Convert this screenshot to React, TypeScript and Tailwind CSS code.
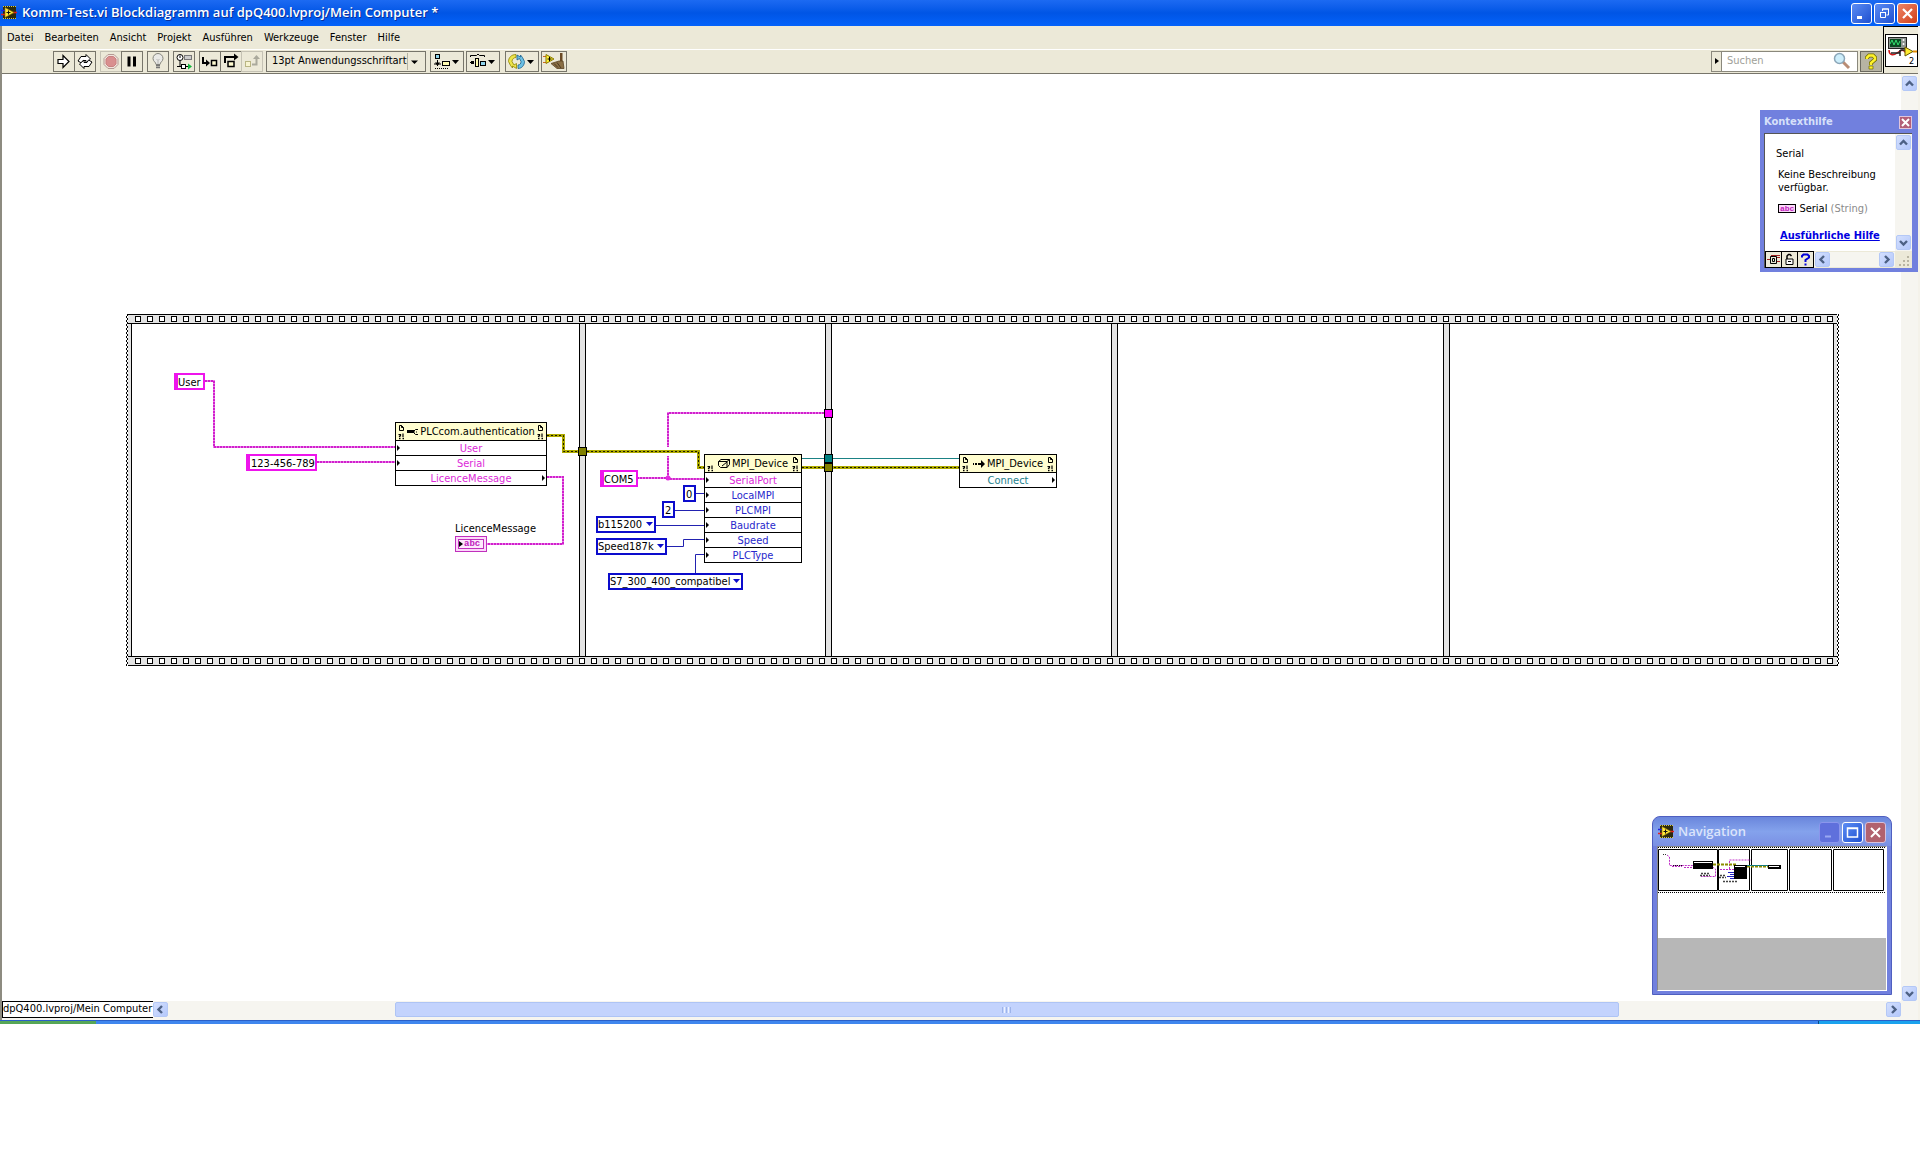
import type { ReactNode } from 'react'
import { clsx } from 'clsx'

const MENU = ['Datei', 'Bearbeiten', 'Ansicht', 'Projekt', 'Ausführen', 'Werkzeuge', 'Fenster', 'Hilfe']

type Direction = 'up' | 'down' | 'left' | 'right'

const CHEVRONS: Record<Direction, string> = {
  up: 'M2 7.500 5.500 4 9 7.500',
  down: 'M2 4 5.500 7.500 9 4',
  left: 'M7 2 3.500 5.500 7 9',
  right: 'M4 2 7.500 5.500 4 9',
}

function ViIcon() {
  return (
    <svg width="16" height="16" viewBox="0 0 16 16" className="shrink-0" aria-hidden="true">
      <rect x="2" y="1" width="13" height="13" fill="#2b2a10" />
      <path d="M2 1.500h13M2 13.500h13" stroke="#d8c840" strokeDasharray="1 1" />
      <path d="M0 5.500h4" stroke="#2020e0" strokeWidth="1.500" />
      <path d="M0 9.500h4M12 7.500h4" stroke="#e02020" strokeWidth="1.500" />
      <path d="M4 2.500v10L13 7.500z" fill="#ffe83a" stroke="#8a6a00" strokeWidth=".6" />
      <path d="M5.500 7.500h4M7.500 5.500v4" stroke="#111" />
    </svg>
  )
}

function WindowButton({ label, tone = 'blue', children }: { label: string; tone?: 'blue' | 'red' | 'dimmed' | 'dimred'; children: ReactNode }) {
  return (
    <button
      type="button"
      aria-label={label}
      className={clsx(
        'flex size-[21px] items-center justify-center rounded-[3px] border',
        tone === 'blue' && 'border-white bg-linear-to-br from-[#5c8cf4] to-[#1f4fd0]',
        tone === 'red' && 'border-white bg-linear-to-br from-[#ee8465] to-[#d03c12]',
        tone === 'dimmed' && 'border-[#8b96ec] bg-[#5f70dc]',
        tone === 'dimred' && 'border-[#d5c0dc] bg-[#b1626f]'
      )}
    >
      <svg width="15" height="15" viewBox="0 0 15 15" fill="none" stroke="#fff" aria-hidden="true">
        {children}
      </svg>
    </button>
  )
}

function ScrollButton({ direction, label }: { direction: Direction; label: string }) {
  return (
    <button
      type="button"
      aria-label={label}
      className="flex size-[15px] shrink-0 items-center justify-center rounded-[2px] border border-[#b4c8f6] bg-linear-to-br from-[#d3dffe] to-[#b4c8fb]"
    >
      <svg width="11" height="11" viewBox="0 0 11 11" className="shrink-0" aria-hidden="true">
        <path d={CHEVRONS[direction]} fill="none" stroke="#4d6185" strokeWidth="2.400" />
      </svg>
    </button>
  )
}

function TitleBar() {
  return (
    <header className="flex h-[26px] items-center bg-linear-to-b from-[#1c6af2] via-[#0055e5] to-[#0462fa] pr-[2px] pl-px text-white">
      <ViIcon />
      <h1 className="ml-[5px] flex-1 font-['Open_Sans','Noto_Sans',sans-serif] text-[13px] font-semibold [text-shadow:1px_1px_#0a2f9a]">
        Komm-Test.vi Blockdiagramm auf dpQ400.lvproj/Mein Computer *
      </h1>
      <div className="flex gap-[2px]">
        <WindowButton label="Minimieren">
          <path d="M3 11.500h5" strokeWidth="3" />
        </WindowButton>
        <WindowButton label="Wiederherstellen">
          <path d="M5.500 5V3h6v6H9.500M5 3h7" />
          <path d="M3.500 6.500h5v5h-5zM3 6.500h6" />
        </WindowButton>
        <WindowButton label="Schließen" tone="red">
          <path d="M3 3l9 9M12 3l-9 9" strokeWidth="2.200" />
        </WindowButton>
      </div>
    </header>
  )
}

function ToolButton({ label, wide, faded, children }: { label: string; wide?: boolean; faded?: boolean; children: ReactNode }) {
  return (
    <button
      type="button"
      aria-label={label}
      className={clsx(
        '-mr-px flex h-[21px] items-center justify-center border',
        wide ? 'w-[34px]' : 'w-[22px]',
        faded ? 'border-[#c5c2b4]' : 'border-[#77756a]'
      )}
    >
      <svg width={wide ? 30 : 18} height="17" viewBox={wide ? '0 0 30 17' : '0 0 18 17'} fill="none" stroke="#000" aria-hidden="true">
        {children}
        {wide && <path d="M20 7h7l-3.500 4z" fill="#000" stroke="none" />}
      </svg>
    </button>
  )
}

function Toolbar() {
  return (
    <div className="flex h-[25px] items-center border-t border-white pl-[51px]">
      <div className="flex">
        <ToolButton label="Ausführen">
          <path d="M3 6.500h5v-4l6 6-6 6v-4H3z" fill="#fff" strokeWidth="1.200" />
        </ToolButton>
        <ToolButton label="Wiederholt ausführen">
          <path d="M2 8l3-4.500h5V1.500l4.500 4.500L10 10V7.500H7L5.500 10z" fill="#fff" />
          <path d="M16 9l-3 4.500H8v2L3.500 11 8 7v2.500h3L12.500 7z" fill="#fff" />
        </ToolButton>
      </div>
      <div className="ml-[5px] flex">
        <ToolButton label="Abbrechen" faded>
          <path d="M6 1.500h6l4 4v6l-4 4H6l-4-4v-6z" fill="#f0e4dc" stroke="#b59a94" />
          <path d="M6.500 3.500h5l2.500 2.500v5l-2.500 2.500h-5L4 11V6z" fill="#d98f8f" stroke="#c98080" />
        </ToolButton>
        <ToolButton label="Pause">
          <path d="M6 3.500v10M11.500 3.500v10" strokeWidth="3" />
        </ToolButton>
      </div>
      <div className="ml-[5px] flex">
        <ToolButton label="Highlight-Funktion">
          <path d="M7 11.500C7 9 4 8.500 4 5.500a5 5 0 0 1 10 0c0 3-3 3.500-3 6z" fill="#e9e9e6" stroke="#85857d" />
          <path d="M7 12.500h4M7 14.500h4" stroke="#777" strokeWidth="1.500" />
          <path d="M7.500 6l1.500 1.500L10.500 6M9 7.500V11" stroke="#aaa" strokeWidth=".8" />
        </ToolButton>
      </div>
      <div className="ml-[5px] flex">
        <ToolButton label="Verbindungswerte speichern">
          <circle cx="5" cy="4.500" r="3" fill="#fff" />
          <path d="M5 2.500v2.500M5 7.500V13M2 13.500h4M10 13.500h3" />
          <rect x="9.500" y="2.500" width="7" height="4" fill="#ccc" stroke="#777" />
          <rect x="6.500" y="11.500" width="4" height="4" fill="#fff" />
          <path d="M13 10.500v6l4-3z" fill="#11b53a" stroke="none" />
        </ToolButton>
      </div>
      <div className="ml-[5px] flex">
        <ToolButton label="Hineinspringen">
          <path d="M2 4v6h4" strokeWidth="2" />
          <path d="M5 6.500v7L9 10z" fill="#000" stroke="none" />
          <rect x="10.500" y="7.500" width="5" height="5" fill="#fffbd0" strokeWidth="1.500" />
        </ToolButton>
        <ToolButton label="Überspringen">
          <path d="M3 10V4h10" strokeWidth="2" />
          <path d="M12 .5v7L16.500 4z" fill="#000" stroke="none" />
          <rect x="6" y="8.500" width="6" height="5" fill="#fffbd0" strokeWidth="1.500" />
        </ToolButton>
        <ToolButton label="Herausspringen" faded>
          <rect x="2.500" y="8.500" width="5" height="5" fill="#f8f4d0" stroke="#b9b584" />
          <path d="M9 11.500h4.500V5" stroke="#aaa99c" strokeWidth="2" />
          <path d="M10 6h7l-3.500-4z" fill="#aaa99c" stroke="none" />
        </ToolButton>
      </div>
      <div className="relative ml-[4px] flex h-[21px] w-[160px] border border-[#77756a]">
        <select
          aria-label="Schriftart"
          defaultValue="13"
          className="w-full appearance-none pl-[5px] text-[11px] leading-[18px] outline-none"
        >
          <option value="13">13pt Anwendungsschriftart</option>
        </select>
        <svg width="18" height="17" viewBox="0 0 18 17" className="pointer-events-none absolute top-px right-0" aria-hidden="true">
          <path d="M.5 0v17" stroke="#b5b2a2" />
          <path d="M4 7.500h7L7.500 11z" />
        </svg>
      </div>
      <div className="ml-[4px] flex gap-[3px]">
        <ToolButton label="Objekte ausrichten" wide>
          <rect x="3.500" y="1.500" width="4" height="4" fill="#8fd4ec" />
          <path d="M5.500 7v6M2 11h7" />
          <path d="M3 9.500h5L5.500 13z" fill="#000" stroke="none" />
          <rect x="10.500" y="8.500" width="7" height="4" fill="#fffbb0" />
          <path d="M3 15.500h14" strokeDasharray="1 1" />
        </ToolButton>
        <ToolButton label="Objekte einteilen" wide>
          <path d="M2.500 4V2.500h6L10 1l1.500 1.500h5V4M2 9.500h4" />
          <path d="M3 8h3v3H3z" fill="#000" stroke="none" />
          <rect x="7.500" y="5.500" width="3" height="8" fill="#fffbb0" />
          <rect x="12.500" y="8.500" width="5" height="4" fill="#8fd4ec" />
        </ToolButton>
      </div>
      <div className="ml-[6px] flex gap-[3px]">
        <ToolButton label="Neuordnen" wide>
          <path d="M9 1.500C4 1.500 1.500 5 1.500 8.500l2 4 2 2.500V13l4 2.500v-5L7 12 5 8.500C5 6 7 4.500 9 4.500z" fill="#ece44a" stroke="#8f8300" strokeWidth=".8" />
          <path d="M11 15.500c4 0 6.500-3.500 6.500-7l-2-4-2-2.500v2L10 2v5l2.500-1.500L14 8.500c0 2-1 3.500-3 3.500z" fill="#6cc0e4" stroke="#1a5f8c" strokeWidth=".8" />
        </ToolButton>
        <button type="button" aria-label="Diagramm bereinigen" className="flex h-[21px] w-[26px] items-center justify-center border border-[#77756a]">
          <svg width="22" height="17" viewBox="0 0 22 17" aria-hidden="true">
            <path d="M0 3.500h4M0 9.500h4" stroke="#d06a20" />
            <path d="M3 1.500v9l8-4.500z" fill="#fff133" stroke="#8a7a00" />
            <path d="M4.500 6h4M6.500 4v4" stroke="#000" />
            <path d="M17 0h2.500v8H17z" fill="#6b4a25" />
            <path d="M8 10.500l8-2.500h4l1 7.500h-7z" fill="#8a6f45" stroke="#5c4425" strokeWidth=".8" />
            <path d="M11 10.500l4 4M14 9.500l4 5.500" stroke="#4c3820" />
          </svg>
        </button>
      </div>
      <div className="mr-[2px] ml-auto flex h-[21px] w-[147px] items-center border border-[#8a887c] bg-white">
        <span className="flex h-full w-[10px] shrink-0 items-center justify-center border-r border-[#8a887c] bg-[#ece9d8]">
          <svg width="4" height="6" viewBox="0 0 4 6" aria-hidden="true">
            <path d="M0 0v6l4-3z" />
          </svg>
        </span>
        <input aria-label="Suchen" placeholder="Suchen" className="w-full min-w-0 pl-[5px] text-[11px] outline-none placeholder:text-[#a09f99]" />
        <svg width="18" height="18" viewBox="0 0 18 18" className="mr-[6px] shrink-0" aria-hidden="true">
          <path d="M10 10l6 6" stroke="#b98d74" strokeWidth="3" />
          <circle cx="6.500" cy="6.500" r="5" fill="#cdeefb" stroke="#8ba6b8" strokeWidth="1.500" />
        </svg>
      </div>
      <button type="button" aria-label="Kontexthilfe anzeigen" className="mr-px flex h-[21px] w-[22px] items-center justify-center border border-[#6b695e] bg-[#b7b4a3]">
        <svg width="14" height="17" viewBox="0 0 14 17" fill="none" aria-hidden="true">
          <path d="M3 6V4.500L5 2.500h4l2 2v2l-4 3.500v2" stroke="#6e6a00" strokeWidth="4" />
          <path d="M3 6V4.500L5 2.500h4l2 2v2l-4 3.500v2" stroke="#fff22a" strokeWidth="2.500" />
          <path d="M5 13h4v3H5z" fill="#fff22a" stroke="#6e6a00" strokeWidth=".7" />
        </svg>
      </button>
    </div>
  )
}

function ConnectorPane() {
  return (
    <div className="flex w-[35px] items-center border-t border-l border-black bg-[#ece9d8] pt-px pl-px">
      <svg width="33" height="33" viewBox="0 0 33 33" aria-hidden="true">
        <rect x=".5" y=".5" width="32" height="32" fill="#fff" stroke="#000" />
        <rect x="3.500" y="3.500" width="18" height="11" fill="#8f9490" stroke="#222" />
        <rect x="5" y="5" width="11" height="8" fill="#0b4a22" />
        <path d="M5 10l2-4 2 5 2-5 2 5 2-4" fill="none" stroke="#35e070" />
        <circle cx="18.500" cy="6" r="1" fill="#fff" />
        <circle cx="18.500" cy="10" r="1" fill="#fff" />
        <path d="M4 16c0 5 4 6 8 3s6-4 9 0" fill="none" stroke="#d01818" strokeWidth="1.500" />
        <path d="M6 19h8l2-3h4M15 16v6" fill="none" stroke="#222" strokeWidth="1.500" />
        <path d="M20 13v9l8-4.500z" fill="#ffec2e" stroke="#6b5a00" />
        <path d="M28 17.500h4" stroke="#e08a00" strokeWidth="2" />
        <text x="24" y="30" fontSize="9">2</text>
      </svg>
    </div>
  )
}

/* Sequence structure: two film rails with the frames between them. */

function FilmRail() {
  return (
    <div className="h-[10px] border-y border-black bg-[#e3e3e3] pt-px pl-[7px]">
      <svg width="100%" height="6" aria-hidden="true">
        <defs>
          <pattern id="sprocket" width="12" height="6" patternUnits="userSpaceOnUse">
            <rect x=".5" y=".5" width="5" height="5" fill="#fff" stroke="#000" />
          </pattern>
        </defs>
        <rect width="100%" height="6" fill="url(#sprocket)" />
      </svg>
    </div>
  )
}

function FilmEdge() {
  return <div className="w-[2px] bg-[repeating-conic-gradient(#000_0_25%,#fff_0_50%)] bg-[length:2px_4px]" />
}

function SequenceStructure() {
  return (
    <div className="flex h-full">
      <FilmEdge />
      <div className="flex flex-1 flex-col">
        <FilmRail />
        <div className="flex flex-1 gap-[5px] bg-[#e3e3e3] px-[3px]">
          <div className="w-[449px] border-x border-black bg-white" />
          <div className="w-[241px] border-x border-black bg-white" />
          <div className="w-[281px] border-x border-black bg-white" />
          <div className="w-[327px] border-x border-black bg-white" />
          <div className="flex-1 border-x border-black bg-white" />
        </div>
        <FilmRail />
      </div>
      <FilmEdge />
    </div>
  )
}

function StringWire({ d }: { d: string }) {
  return (
    <g fill="none">
      <path d={d} stroke="#ea7ce8" strokeWidth="2" />
      <path d={d} stroke="#d020cc" strokeWidth="2" strokeDasharray="2 1" />
    </g>
  )
}

function ErrorWire({ d }: { d: string }) {
  return (
    <g fill="none">
      <path d={d} stroke="#aeaa00" strokeWidth="3" />
      <path d={d} stroke="#1a1a00" strokeDasharray="2 2" />
    </g>
  )
}

function Wires() {
  return (
    <svg className="pointer-events-none absolute inset-0 size-full" aria-hidden="true">
      <StringWire d="M79 67H88V133H269" />
      <StringWire d="M191 148H269" />
      <StringWire d="M421 163H437V230H361" />
      <StringWire d="M511 164H542L545 165H578" />
      <StringWire d="M542 164V99H699" />
      <path d="M542 133v9" stroke="#fff" strokeWidth="3" />
      <circle cx="542" cy="164" r="2.500" fill="#e22be0" />
      <ErrorWire d="M421 121.500H437.500V137.500H572.500V153.500H578" />
      <ErrorWire d="M676 153.500H833" />
      <path d="M676 144.500H833" stroke="#1b8285" />
      <path
        d="M570 179.500H578M549 196.500H578M530 211.500H578M541 232.500H557.500V225.500H578M569.500 259V240.500H578"
        fill="none"
        stroke="#2222b0"
      />
      <g stroke="#000">
        <rect x="452.500" y="133.500" width="8" height="8" fill="#808000" />
        <rect x="698.500" y="95.500" width="8" height="8" fill="#ff00ff" />
        <rect x="698.500" y="140.500" width="8" height="8" fill="#008080" />
        <rect x="698.500" y="149.500" width="8" height="8" fill="#808000" />
      </g>
    </svg>
  )
}

function StringConstant({ label, value, className }: { label: string; value: string; className: string }) {
  return (
    <input
      aria-label={label}
      defaultValue={value}
      className={clsx(
        'absolute h-[17px] border-2 border-l-4 border-[#ee14ec] bg-white pt-px text-[11px] leading-[12px] outline-none',
        className
      )}
    />
  )
}

function NumberConstant({ label, value, className }: { label: string; value: string; className: string }) {
  return (
    <input
      aria-label={label}
      defaultValue={value}
      className={clsx(
        'absolute h-[17px] w-[13px] border-2 border-[#0c0ccc] bg-white pt-px pl-px text-[11px] leading-[12px] outline-none',
        className
      )}
    />
  )
}

function EnumConstant({ label, value, className }: { label: string; value: string; className: string }) {
  return (
    <div className={clsx('absolute flex h-[17px] border-2 border-[#0c0ccc] bg-white', className)}>
      <select aria-label={label} defaultValue={value} className="w-full appearance-none pt-px text-[11px] leading-[12px] outline-none">
        <option>{value}</option>
      </select>
      <svg width="7" height="4" viewBox="0 0 7 4" className="pointer-events-none absolute top-[4px] right-px" aria-hidden="true">
        <path d="M0 0h7L3.500 4z" fill="#0c0ccc" />
      </svg>
    </div>
  )
}

/* Reference and error terminals stacked at either end of a node header. */
function HeaderTerminals({ page = true }: { page?: boolean }) {
  return (
    <svg width="7" height="16" viewBox="0 0 7 16" className="shrink-0" fill="none" stroke="#000" aria-hidden="true">
      {page && <path d="M1.500 1.500h2l2 2v3h-4zM3.500 1.500v2h2" />}
      <path d="M.5 10.500h2v1.500h-1v1M5 9.500v3.500" strokeWidth="1.200" />
      <path d="M1 14.500h1.500M4.500 14.500H6" strokeWidth="1.500" />
    </svg>
  )
}

interface NodeRow {
  name: string
  color: string
  output?: boolean
}

interface DiagramNodeProps {
  title: string
  icon: ReactNode
  rows: NodeRow[]
  hasInputRef?: boolean
  className: string
}

function DiagramNode({ title, icon, rows, hasInputRef = true, className }: DiagramNodeProps) {
  return (
    <div className={clsx('absolute border border-black bg-white text-[11px]', className)}>
      <div className="flex h-[17px] items-center justify-between bg-[#fffdcf] px-[2px]">
        <HeaderTerminals page={hasInputRef} />
        <span className="flex items-center gap-[2px] leading-[16px] whitespace-nowrap">
          {icon}
          {title}
        </span>
        <HeaderTerminals />
      </div>
      {rows.map((row) => (
        <div key={row.name} className="relative h-[15px] border-t border-black text-center leading-[15px]">
          <span className={row.color}>{row.name}</span>
          <svg
            width="3"
            height="6"
            viewBox="0 0 3 6"
            className={clsx('absolute top-[4px]', row.output ? 'right-px' : 'left-px')}
            aria-hidden="true"
          >
            <path d="M0 0v6l3-3z" />
          </svg>
        </div>
      ))}
    </div>
  )
}

const KeyIcon = (
  <svg width="11" height="8" viewBox="0 0 11 8" aria-hidden="true">
    <path d="M0 2h7v3H0z" />
    <path d="M11 1.500H8.500L7 3v2l1.500 1.500H11M9 4h1" fill="none" stroke="#000" />
  </svg>
)

const DeviceIcon = (
  <svg width="12" height="9" viewBox="0 0 12 9" fill="none" stroke="#000" aria-hidden="true">
    <path d="M.5 2.500 3 .5h8.500v5l-2.500 3H2.500l-2-2zM.5 2.500H9v6M9 2.500l2.500-2M4 7l5-4" />
  </svg>
)

const InvokeIcon = (
  <svg width="12" height="8" viewBox="0 0 12 8" aria-hidden="true">
    <path d="M0 3h1v2H0zM2 3h2v2H2zM5 3h3V0l4 4-4 4V5H5z" />
  </svg>
)

const PINK = 'text-[#dc28d8]'
const BLUE = 'text-[#2828cc]'

function BlockDiagram() {
  return (
    <section aria-label="Blockdiagramm" className="absolute top-[240px] left-[124px] h-[352px] w-[1713px]">
      <SequenceStructure />
      <Wires />

      <StringConstant label="Benutzer" value="User" className="top-[59px] left-[48px] w-[31px]" />
      <StringConstant label="Seriennummer" value="123-456-789" className="top-[140px] left-[120px] w-[71px] pl-px" />
      <DiagramNode
        title="PLCcom.authentication"
        icon={KeyIcon}
        className="top-[108px] left-[269px] w-[152px]"
        rows={[
          { name: 'User', color: PINK },
          { name: 'Serial', color: PINK },
          { name: 'LicenceMessage', color: PINK, output: true },
        ]}
      />
      <div className="absolute top-[208px] left-[329px] text-[11px] leading-[14px]">
        LicenceMessage
        <div className="flex h-[16px] w-[32px] items-center border border-[#c030bc] bg-[#fbd8fa] px-[2px]">
          <div className="flex h-[10px] w-full items-center border border-[#c030bc] bg-[#fdeafc]">
            <svg width="4" height="6" viewBox="0 0 4 6" className="mr-px" aria-hidden="true">
              <path d="M0 0v6l4-3z" />
            </svg>
            <span className="font-['Liberation_Mono',monospace] text-[9px] leading-[8px] font-bold text-[#c020bc]">abc</span>
          </div>
        </div>
      </div>

      <StringConstant label="Serielle Schnittstelle" value="COM5" className="top-[156px] left-[474px] w-[38px]" />
      <NumberConstant label="Lokale MPI" value="0" className="top-[171px] left-[557px]" />
      <NumberConstant label="SPS MPI" value="2" className="top-[187px] left-[536px]" />
      <EnumConstant label="Baudrate" value="b115200" className="top-[202px] left-[470px] w-[60px]" />
      <EnumConstant label="Geschwindigkeit" value="Speed187k" className="top-[224px] left-[470px] w-[71px]" />
      <EnumConstant label="SPS-Typ" value="S7_300_400_compatibel" className="top-[259px] left-[482px] w-[135px]" />
      <DiagramNode
        title="MPI_Device"
        icon={DeviceIcon}
        hasInputRef={false}
        className="top-[140px] left-[578px] w-[98px]"
        rows={[
          { name: 'SerialPort', color: PINK },
          { name: 'LocalMPI', color: BLUE },
          { name: 'PLCMPI', color: BLUE },
          { name: 'Baudrate', color: BLUE },
          { name: 'Speed', color: BLUE },
          { name: 'PLCType', color: BLUE },
        ]}
      />
      <DiagramNode
        title="MPI_Device"
        icon={InvokeIcon}
        className="top-[140px] left-[833px] w-[98px]"
        rows={[{ name: 'Connect', color: 'text-[#23808c]', output: true }]}
      />
    </section>
  )
}

function ContextHelp() {
  return (
    <aside className="absolute top-[36px] right-0 z-10 w-[158px] bg-[#7180de] pr-[6px] pb-[4px] pl-[4px]">
      <div className="flex h-[23px] items-center justify-between pt-[2px]">
        <h2 className="text-[11px] font-bold text-[#d7e0fa]">Kontexthilfe</h2>
        <button type="button" aria-label="Kontexthilfe schließen" className="flex size-[13px] items-center justify-center border border-[#e0c4dc] bg-[#b35f78]">
          <svg width="9" height="9" viewBox="0 0 9 9" aria-hidden="true">
            <path d="M1 1l7 7M8 1L1 8" stroke="#fff" strokeWidth="2" />
          </svg>
        </button>
      </div>
      <div className="border-t border-l border-[#555] bg-[#ece9d8]">
        <div className="flex h-[117px] bg-white">
          <div className="flex-1 pt-[12px] pl-[11px] text-[11px] leading-[13px] whitespace-nowrap">
            <p className="leading-[15px]">Serial</p>
            <p className="mt-[7px] ml-[2px]">
              Keine Beschreibung
              <br />
              verfügbar.
            </p>
            <p className="mt-[8px] ml-[2px] flex items-center gap-[3px]">
              <span className="border border-black bg-[#fbd8fa] px-px font-['Liberation_Mono',monospace] text-[8px] leading-[7px] font-bold text-[#c020bc]">
                abc
              </span>
              <span>
                Serial <span className="text-[#8a8a8a]">(String)</span>
              </span>
            </p>
            <p className="mt-[14px] ml-[4px]">
              <a href="#hilfe" className="font-bold text-[#0000e0] underline">
                Ausführliche Hilfe
              </a>
            </p>
          </div>
          <div className="flex w-[17px] flex-col items-center justify-between bg-[#f6f5f0] pt-px pb-px">
            <ScrollButton direction="up" label="Hilfe nach oben" />
            <ScrollButton direction="down" label="Hilfe nach unten" />
          </div>
        </div>
        <div className="flex h-[17px] items-center">
          <button type="button" aria-label="Optionale Anschlüsse" className="h-full w-[17px] border border-black">
            <svg width="15" height="15" viewBox="0 0 15 15" fill="none" stroke="#000" aria-hidden="true">
              <path d="M1 7.500h4M10 5.500h4M10 9.500h4M5 3.500h9" stroke="#a02020" />
              <path d="M4.500 4.500h6v7h-6zM6.500 6.500h2v3h-2z" />
            </svg>
          </button>
          <button type="button" aria-label="Hilfe sperren" className="-ml-px h-full w-[17px] border border-black">
            <svg width="15" height="15" viewBox="0 0 15 15" fill="none" stroke="#000" aria-hidden="true">
              <path d="M5 7V4l1.500-1.500H8L9.500 4" strokeWidth="1.500" />
              <path d="M4 7h7v5.500H4zM6 9.500h3" fill="#fff" />
            </svg>
          </button>
          <button type="button" aria-label="Ausführliche Hilfe öffnen" className="-ml-px h-full w-[17px] border border-black">
            <svg width="15" height="15" viewBox="0 0 15 15" fill="none" stroke="#0000d8" strokeWidth="2" aria-hidden="true">
              <path d="M4 5.500V4l1.500-1.500h4L11 4v1.500L7.500 8v2M7.500 11.500v2" />
            </svg>
          </button>
          <span className="flex flex-1 items-center justify-between bg-[#f6f5f0] px-px">
            <ScrollButton direction="left" label="Hilfe nach links" />
            <ScrollButton direction="right" label="Hilfe nach rechts" />
          </span>
          <svg width="17" height="15" viewBox="0 0 17 15" fill="#b9b5a2" aria-hidden="true">
            <path d="M12 4h2v2h-2zM12 8h2v2h-2zM8 8h2v2H8zM12 12h2v2h-2zM8 12h2v2H8zM4 12h2v2H4z" />
          </svg>
        </div>
      </div>
    </aside>
  )
}

function NavigationWindow() {
  return (
    <aside className="absolute right-[26px] bottom-[6px] z-10 w-[240px] rounded-t-lg border border-[#4f5fc0] bg-[#7180de] px-[4px] pb-[3px]">
      <div className="-mx-[4px] flex h-[29px] items-center rounded-t-lg bg-linear-to-b from-[#6a86dc] via-[#84a2ec] to-[#7b90e4] pt-px pr-[5px] pl-[5px]">
        <ViIcon />
        <h2 className="ml-[4px] flex-1 font-['Open_Sans','Noto_Sans',sans-serif] text-[13px] font-semibold text-[#dbe4fb]">Navigation</h2>
        <div className="flex gap-[2px]">
          <WindowButton label="Navigation minimieren" tone="dimmed">
            <path d="M3 11.500h6" stroke="#9aa8f2" strokeWidth="2" />
          </WindowButton>
          <WindowButton label="Navigation maximieren">
            <path d="M2.500 3h10v9h-10zM2 3.500h11" strokeWidth="1.500" />
          </WindowButton>
          <WindowButton label="Navigation schließen" tone="dimred">
            <path d="M3 3l9 9M12 3l-9 9" strokeWidth="2" />
          </WindowButton>
        </div>
      </div>
      <div className="border border-t-[#888] border-r-white border-b-white border-l-[#888] bg-white">
        <svg width="100%" height="91" viewBox="0 0 228 91" preserveAspectRatio="none" fill="none" aria-hidden="true">
          <path d="M0 .5h227M0 45.500h227" stroke="#000" strokeDasharray="1 1" />
          <path d="M.5 2.500h59v41H.5zM60.500 2.500h31v41h-31zM93.500 2.500h36v41h-36zM131.500 2.500h42v41h-42zM175.500 2.500h50v41h-50z" stroke="#000" />
          <path d="M5 7.500h4" stroke="#333" strokeDasharray="1 1" />
          <path d="M9 8l2.500 2v8.500H35M14 19.500h10M26 20.500h9M54.500 20l3 2v7.500H43M62 22.500h14M71.500 22v-9H93" stroke="#c030c8" strokeDasharray="2 1" />
          <path d="M42 28.500h10M43 26.500h9M62 28.500h6M61 30.500h7M65 34.500h14" stroke="#444" strokeDasharray="2 1" strokeWidth="1.500" />
          <path d="M15 18.500h9" stroke="#111" strokeDasharray="1 1" />
          <path d="M55 17.500h22v2M89 19.500h22" stroke="#8c8c00" strokeWidth="2" strokeDasharray="3 1" />
          <path d="M89 18.500h22" stroke="#157c80" />
          <path d="M70 25.500h6M72 27.500h4M69 29.500h7M72 31.500h4" stroke="#2020c0" />
          <path d="M35 14h20v8H35zM76 18h13v14H76zM110 18h13v4h-13z" fill="#000" />
          <path d="M36 15.500h18M77 19.500h10M111 19.500h10" stroke="#fff" />
        </svg>
        <div className="h-[52px] bg-[#b7b7b7]" />
      </div>
    </aside>
  )
}

export default function App() {
  return (
    <div className="flex min-h-screen flex-col bg-white pb-[126px] font-['DejaVu_Sans_Condensed','Noto_Sans',sans-serif] text-black">
      <TitleBar />
      <div className="flex flex-1 flex-col border-x-2 border-l-[#8d8b80] border-r-[#f4f2ea]">
        <div className="flex h-[48px] border-b border-[#77756a] bg-[#ece9d8]">
          <div className="flex flex-1 flex-col">
            <nav className="flex h-[23px] items-center gap-[11px] pt-px pl-[5px] text-[11px]">
              {MENU.map((item) => (
                <button key={item} type="button">
                  {item}
                </button>
              ))}
            </nav>
            <Toolbar />
          </div>
          <ConnectorPane />
        </div>
        <main className="relative flex min-h-[620px] flex-1 overflow-hidden">
          <BlockDiagram />
          <div className="ml-auto flex w-[17px] flex-col items-center justify-between bg-[#f6f5f0] pt-[2px]">
            <ScrollButton direction="up" label="Nach oben" />
            <ScrollButton direction="down" label="Nach unten" />
          </div>
          <ContextHelp />
          <NavigationWindow />
        </main>
        <footer className="flex h-[19px] items-start bg-[#f6f5f0] pr-[17px]">
          <div className="h-[17px] w-[151px] border border-r-0 border-black bg-white text-[11px] leading-[14px] whitespace-nowrap">
            dpQ400.lvproj/Mein Computer
          </div>
          <div className="flex flex-1 items-center pt-px">
            <ScrollButton direction="left" label="Nach links" />
            <div className="grid flex-1 grid-cols-[227fr_1223fr_267fr]">
              <div className="col-start-2 flex h-[15px] items-center justify-center gap-px rounded-[2px] border border-[#aec4f5] bg-[#c3d3fd]">
                <span className="h-[6px] w-px bg-[#9db4ea]" />
                <span className="h-[6px] w-px bg-[#eef3ff]" />
                <span className="h-[6px] w-px bg-[#9db4ea]" />
                <span className="h-[6px] w-px bg-[#eef3ff]" />
                <span className="h-[6px] w-px bg-[#9db4ea]" />
              </div>
            </div>
            <ScrollButton direction="right" label="Nach rechts" />
          </div>
        </footer>
      </div>
      <div className="flex h-[4px] border-t border-[#2a5fc8] bg-[#3f86ee]">
        <div className="w-[96px] bg-[#56a656]" />
        <div className="ml-auto w-[102px] border-l border-[#0b4a86] bg-[#1aa2ee]" />
      </div>
    </div>
  )
}
